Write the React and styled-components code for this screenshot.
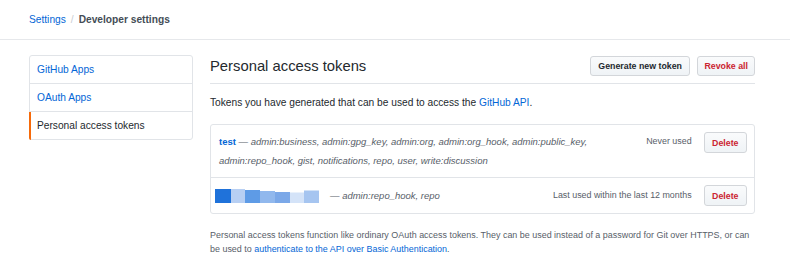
import React from "react";
import styled, { createGlobalStyle } from "styled-components";

const GlobalStyle = createGlobalStyle`
  body {
    margin: 0;
    background: #fff;
    color: #24292e;
    font-family: "Liberation Sans", Helvetica, Arial, sans-serif;
    font-size: 10.2px;
  }
  * { box-sizing: border-box; }
`;

const Page = styled.div`
  width: 800px;
`;

const Header = styled.div`
  display: flex;
  align-items: center;
  height: 40px;
  margin-right: 10px;
  padding-left: 29px;
  border-bottom: 1px solid #e6e8eb;
  font-size: 10.2px;
`;

const Crumb = styled.a`
  color: #0366d6;
  text-decoration: none;
`;

const Sep = styled.span`
  color: #c8ccd1;
  margin: 0 5px;
`;

const Current = styled.strong`
  color: #444d56;
  font-weight: 700;
`;

const Layout = styled.div`
  display: flex;
  align-items: flex-start;
  gap: 17px;
  padding: 15px 0 0 29px;
`;

const SideMenu = styled.nav`
  width: 164px;
  border: 1px solid #e1e4e8;
  border-radius: 3px;
`;

const MenuItem = styled.a`
  position: relative;
  display: flex;
  align-items: center;
  height: 27px;
  padding-left: 7px;
  color: ${(p) => (p.$selected ? "#24292e" : "#0366d6")};
  text-decoration: none;
  & + & {
    border-top: 1px solid #e1e4e8;
    height: 28px;
  }
  ${(p) =>
    p.$selected &&
    `
    &::before {
      content: "";
      position: absolute;
      left: -1px;
      top: 0;
      bottom: -1px;
      width: 2px;
      background: #f66a0a;
      border-bottom-left-radius: 3px;
    }
  `}
`;

const Main = styled.main`
  width: 545px;
  flex: none;
`;

const Subhead = styled.div`
  display: flex;
  align-items: flex-start;
  justify-content: space-between;
  padding: 1px 0 7px;
  border-bottom: 1px solid #e1e4e8;
`;

const Title = styled.h2`
  margin: 0;
  font-size: 14.8px;
  font-weight: 400;
  line-height: 20px;
  color: #24292e;
`;

const Actions = styled.div`
  display: flex;
  gap: 7px;
`;

const Button = styled.button`
  height: ${(p) => (p.$small ? "21px" : "20px")};
  padding: 0 ${(p) => (p.$small ? "7.5px" : p.$danger ? "6px" : "7.5px")};
  border: 1px solid #d3d6da;
  border-radius: 3px;
  background: linear-gradient(#fafbfc, #eff3f6);
  color: ${(p) => (p.$danger ? "#cb2431" : "#24292e")};
  font-family: inherit;
  font-size: 8.8px;
  font-weight: 700;
  white-space: nowrap;
`;

const Intro = styled.p`
  margin: 11px 0 13px;
  line-height: 16px;
  color: #24292e;
`;

const Link = styled.a`
  color: #0366d6;
  text-decoration: none;
`;

const TokenList = styled.div`
  border: 1px solid #e1e4e8;
  border-radius: 3px;
`;

const TokenRow = styled.div`
  display: flex;
  align-items: ${(p) => (p.$center ? "center" : "flex-start")};
  padding: 7px 7px 7px 8px;
  font-size: 9.5px;
  line-height: 19px;
  & + & {
    border-top: 1px solid #e1e4e8;
  }
`;

const TokenInfo = styled.div`
  flex: 1;
  max-width: 410px;
  display: flex;
  align-items: center;
`;

const Description = styled.div`
  color: #586069;
`;

const TokenName = styled.a`
  color: #0366d6;
  font-weight: 700;
  text-decoration: none;
`;

const Scopes = styled.em`
  color: #586069;
`;

const LastUsed = styled.span`
  margin-left: auto;
  color: #586069;
  font-size: 8.9px;
  white-space: nowrap;
`;

const DeleteSlot = styled.div`
  margin-left: 12px;
`;

const Redacted = styled.svg`
  display: block;
  flex: none;
  margin: 0 11px 0 -4px;
`;

const Note = styled.p`
  margin: 15px 0 0;
  font-size: 8.95px;
  line-height: 13.5px;
  color: #586069;
`;

const blobParts = [
  { x: 0, w: 16, top: 0, fill: "#1f72da" },
  { x: 16, w: 14, top: 0, fill: "#b7cff3" },
  { x: 30, w: 15, top: 1, fill: "#5e9be6" },
  { x: 45, w: 15, top: 2, fill: "#91b8ed" },
  { x: 60, w: 15, top: 3, fill: "#7ba8e8" },
  { x: 75, w: 14, top: 3.5, fill: "#d4e3f8" },
  { x: 89, w: 15, top: 1.5, fill: "#a6c5f0" },
];

const RedactedName = () => (
  <Redacted width="104" height="14" viewBox="0 0 104 14">
    {blobParts.map((b) => (
      <rect key={b.x} x={b.x} y={b.top} width={b.w} height={14 - b.top} fill={b.fill} />
    ))}
  </Redacted>
);

const tokens = [
  {
    name: "test",
    scopes:
      "admin:business, admin:gpg_key, admin:org, admin:org_hook, admin:public_key, admin:repo_hook, gist, notifications, repo, user, write:discussion",
    lastUsed: "Never used",
  },
  {
    redacted: true,
    scopes: "admin:repo_hook, repo",
    lastUsed: "Last used within the last 12 months",
  },
];

export default function App() {
  return (
    <Page>
      <GlobalStyle />
      <Header>
        <Crumb href="#">Settings</Crumb>
        <Sep>/</Sep>
        <Current>Developer settings</Current>
      </Header>
      <Layout>
        <SideMenu>
          <MenuItem href="#">GitHub Apps</MenuItem>
          <MenuItem href="#">OAuth Apps</MenuItem>
          <MenuItem href="#" $selected>
            Personal access tokens
          </MenuItem>
        </SideMenu>
        <Main>
          <Subhead>
            <Title>Personal access tokens</Title>
            <Actions>
              <Button>Generate new token</Button>
              <Button $danger>Revoke all</Button>
            </Actions>
          </Subhead>
          <Intro>
            Tokens you have generated that can be used to access the <Link href="#">GitHub API</Link>.
          </Intro>
          <TokenList>
            {tokens.map((t, i) => (
              <TokenRow key={i} $center={t.redacted}>
                <TokenInfo>
                  {t.redacted && <RedactedName />}
                  <Description>
                    {t.name && <TokenName href="#">{t.name}</TokenName>}
                    {t.name ? " " : ""}
                    <Scopes>— {t.scopes}</Scopes>
                  </Description>
                </TokenInfo>
                <LastUsed>{t.lastUsed}</LastUsed>
                <DeleteSlot>
                  <Button $small $danger>Delete</Button>
                </DeleteSlot>
              </TokenRow>
            ))}
          </TokenList>
          <Note>
            Personal access tokens function like ordinary OAuth access tokens. They can be used instead of a
            password for Git over HTTPS, or can be used to{" "}
            <Link href="#">authenticate to the API over Basic Authentication</Link>.
          </Note>
        </Main>
      </Layout>
    </Page>
  );
}
